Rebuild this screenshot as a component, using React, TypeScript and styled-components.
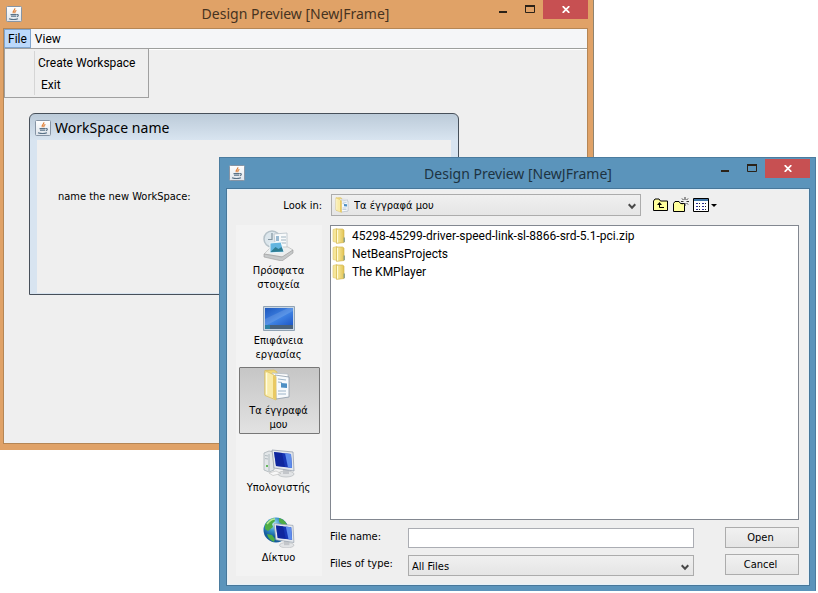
import React from "react";
import styled, { createGlobalStyle, css } from "styled-components";

const titleFont = '"Noto Sans", sans-serif';
const uiFont = 'Roboto, "Noto Sans", sans-serif';
const labelFont = '"DejaVu Sans Condensed", "Noto Sans", sans-serif';

const GlobalStyle = createGlobalStyle`
  *, *::before, *::after { box-sizing: border-box; }
  body { margin: 0; background: #fff; }
  button, input, select { font: inherit; color: inherit; margin: 0; }
`;

/* ---------- desktop and windows ---------- */

const Desktop = styled.main`
  position: relative;
  min-height: 100vh;
  overflow: hidden;
  font: 12px/18px ${uiFont};
  color: #000;
`;

const WindowFrame = styled.section<{ $tone: "orange" | "blue" }>`
  position: absolute;
  display: flex;
  flex-direction: column;
  ${({ $tone }) =>
    $tone === "orange"
      ? css`
          top: 0;
          left: 0;
          right: 224px;
          height: 450px;
          padding: 0 5px 6px 3px;
          background: #e0a267;
          border-right: 1px solid #8f8470;
        `
      : css`
          top: 157px;
          left: 219px;
          right: 2px;
          bottom: 2px;
          min-height: 434px;
          padding: 0 5px 4px 6px;
          background: #5b94bb;
          border: 1px solid #4b7c9f;
          border-bottom-color: #5b94bb;
        `}
`;

const TitleBar = styled.header<{ $tall?: boolean }>`
  display: grid;
  grid-template-columns: 1fr auto 1fr;
  height: ${({ $tall }) => ($tall ? 30 : 28)}px;
  padding-top: ${({ $tall }) => ($tall ? 1 : 0)}px;
  flex: none;
`;

const TitleIcon = styled.span`
  padding: 6px 3px 0;
  line-height: 0;
`;

const Title = styled.h1<{ $tone: "orange" | "blue" }>`
  margin: 0;
  padding-top: ${({ $tone }) => ($tone === "orange" ? 3 : 4)}px;
  font: 400 14px/22px ${titleFont};
  white-space: nowrap;
  color: ${({ $tone }) => ($tone === "orange" ? "#46331f" : "#1d3342")};
`;

const Controls = styled.div`
  display: flex;
  justify-content: flex-end;
`;

const ControlButton = styled.button<{ $close?: boolean }>`
  display: flex;
  align-items: center;
  justify-content: center;
  width: ${({ $close }) => ($close ? 45 : 27)}px;
  height: 19px;
  padding: 0;
  border: 0;
  color: ${({ $close }) => ($close ? "#fff" : "#2b2218")};
  background: ${({ $close }) => ($close ? "#c75052" : "transparent")};
`;

const Client = styled.div<{ $tone: "orange" | "blue" }>`
  flex: 1;
  min-height: 0;
  display: flex;
  flex-direction: column;
  background: #efefef;
  border: 1px solid ${({ $tone }) => ($tone === "orange" ? "#b58655" : "#47779a")};
  ${({ $tone }) => $tone === "blue" && "box-shadow: inset 0 0 0 1px #e6f1f8;"}
`;

/* ---------- menus ---------- */

const MenuBar = styled.nav`
  display: flex;
  height: 20px;
  background: #f5f6f8;
  border-bottom: 1px solid #9d9f9d;
  box-shadow: 0 1px #fff;
`;

const MenuSlot = styled.div`
  position: relative;
`;

const MenuButton = styled.button<{ $open?: boolean }>`
  height: 19px;
  padding: 1px 3px 0;
  line-height: 17px;
  border: 1px solid ${({ $open }) => ($open ? "#7fa5cf" : "transparent")};
  background: ${({ $open }) => ($open ? "#bcd9fb" : "transparent")};
`;

const MenuPopup = styled.div`
  position: absolute;
  top: 19px;
  left: 0;
  width: 145px;
  display: flex;
  flex-direction: column;
  padding: 3px 0 1px;
  border: 1px solid #a0a0a0;
  background: linear-gradient(#d5d5d5, #d5d5d5) 29px 2px / 1px calc(100% - 4px) no-repeat #efefef;
`;

const MenuItem = styled.button<{ $indent?: boolean }>`
  height: 22px;
  padding: 0 0 0 ${({ $indent }) => ($indent ? 36 : 33)}px;
  border: 0;
  background: none;
  text-align: left;
  white-space: nowrap;
`;

/* ---------- inner workspace frame ---------- */

const FramePane = styled.div`
  flex: 1;
  padding: 64px 128px 148px 25px;
  display: flex;
`;

const InnerFrame = styled.section`
  flex: 1;
  display: flex;
  flex-direction: column;
  padding: 0 7px 1px;
  border: 1px solid #47505a;
  border-radius: 6px 6px 0 0;
  background: linear-gradient(#bccbd9, #d8e4f0 26px, #d8e4f0);
`;

const InnerTitle = styled.h2`
  display: flex;
  align-items: center;
  gap: 4px;
  height: 26px;
  padding-top: 1px;
  margin: 0 0 0 -2px;
  font: 400 14px/20px ${titleFont};
  white-space: nowrap;
`;

const InnerBody = styled.div`
  flex: 1;
  padding: 48px 21px;
  background: #efefef;
  font: 11px/18px ${labelFont};
`;

/* ---------- file chooser ---------- */

const Chooser = styled.form`
  flex: 1;
  min-height: 0;
  display: grid;
  grid-template-columns: 86px minmax(0, 1fr);
  grid-template-rows: 22px minmax(0, 1fr);
  gap: 9px 8px;
  padding: 5px 10px 9px 9px;
`;

const Label = styled.label<{ $end?: boolean }>`
  font: 11px/20px ${labelFont};
  white-space: nowrap;
  text-align: ${({ $end }) => ($end ? "right" : "left")};
  padding-top: ${({ $end }) => ($end ? 2 : 0)}px;
`;

const LookRow = styled.div`
  display: flex;
  align-items: center;
  margin-left: 1px;
`;

const SelectBox = styled.div<{ $wide?: boolean }>`
  position: relative;
  height: ${({ $wide }) => ($wide ? 22 : 21)}px;
  flex: ${({ $wide }) => ($wide ? "0 1 310px" : "1")};
`;

const Select = styled.select<{ $icon?: boolean }>`
  appearance: none;
  display: block;
  width: 100%;
  height: 100%;
  padding: 2px 20px 0 ${({ $icon }) => ($icon ? 22 : 3)}px;
  border: 1px solid #acacac;
  border-radius: 0;
  background: linear-gradient(#f0f0f0, #e5e5e5);
  font: 11px/18px ${labelFont};
`;

const SelectIcon = styled.span`
  position: absolute;
  top: 3px;
  left: 4px;
  line-height: 0;
  pointer-events: none;
`;

const Arrow = styled.svg`
  position: absolute;
  right: 5px;
  top: 9px;
  pointer-events: none;
`;

const Tools = styled.div`
  display: flex;
  gap: 4px;
  margin-left: 12px;
`;

const ToolButton = styled.button`
  height: 16px;
  padding: 0;
  border: 0;
  background: none;
  line-height: 0;
`;

const Places = styled.nav`
  display: flex;
  flex-direction: column;
  gap: 2px;
  padding: 2px 2px 2px 3px;
  background: #f3f3f3;
`;

const Place = styled.button<{ $active?: boolean }>`
  height: 68px;
  display: flex;
  flex-direction: column;
  align-items: center;
  justify-content: center;
  gap: 3px;
  padding: 0 4px 0 2px;
  border: 1px solid ${({ $active }) => ($active ? "#777" : "transparent")};
  border-radius: 1px;
  background: ${({ $active }) => ($active ? "linear-gradient(#c6c6c6, #e2e2e2)" : "none")};
  font: 11px/14px ${labelFont};
`;

const PlaceText = styled.span`
  white-space: pre-line;
`;

const Main = styled.div`
  display: flex;
  flex-direction: column;
  gap: 7px;
  min-height: 0;
`;

const FileList = styled.ul`
  flex: 1;
  margin: 0;
  padding: 1px;
  list-style: none;
  border: 1px solid #828790;
  background: #fff;
`;

const FileRow = styled.li`
  display: flex;
  align-items: center;
  gap: 5px;
  height: 18px;
  white-space: nowrap;
`;

const Fields = styled.div`
  display: grid;
  grid-template-columns: 78px minmax(0, 1fr) 74px;
  grid-template-rows: 21px 22px;
  row-gap: 6px;
`;

const FieldCell = styled.div`
  display: flex;
  align-items: flex-end;
  margin-right: 31px;
`;

const TextInput = styled.input`
  width: 100%;
  height: 20px;
  padding: 0 3px;
  border: 1px solid #abadb3;
  background: #fff;
  font: 11px/18px ${labelFont};
`;

const PushButton = styled.button`
  height: 21px;
  padding: 0 3px 0 0;
  border: 1px solid #acacac;
  background: linear-gradient(#f1f1f1, #e5e5e5);
  font: 11px/18px ${labelFont};
`;

/* ---------- icons ---------- */

const JavaIcon = () => (
  <svg width="16" height="16" viewBox="0 0 16 16" aria-hidden="true">
    <defs>
      <linearGradient id="javaBg" x2="0" y2="1">
        <stop stopColor="#fff" />
        <stop offset="1" stopColor="#dfe5ec" />
      </linearGradient>
    </defs>
    <rect x=".5" y=".5" width="15" height="15" rx="1" fill="url(#javaBg)" stroke="#8795a5" />
    <path d="M8.8 2.2c.8 1.8-2.8 2.6-1.5 5M10.4 4.5c-1.8.8-2 1.4-1.2 2.8" fill="none" stroke="#e07a2d" strokeWidth="1.1" />
    <path d="M4.5 8.6h6M5 10.3h5M3 12.7c2.5.9 6.5.9 9 0M10.8 8.6c2.2-.5 2 1.5 0 2" fill="none" stroke="#587186" strokeWidth="1.1" />
  </svg>
);

const Minimise = () => (
  <svg width="8" height="19" aria-hidden="true"><path d="M0 12h8" stroke="currentColor" strokeWidth="2" /></svg>
);
const Maximise = () => (
  <svg width="10" height="19" aria-hidden="true">
    <path d="M.5 6v6.5h9V6" fill="none" stroke="currentColor" /><path d="M0 6h10" stroke="currentColor" strokeWidth="2" />
  </svg>
);
const Close = () => (
  <svg width="8" height="7" viewBox="0 0 8 7" aria-hidden="true">
    <path d="M.7.2l6.6 6.6M7.3.2L.7 6.8" stroke="currentColor" strokeWidth="1.8" />
  </svg>
);

const Chevron = () => (
  <Arrow width="8" height="7" viewBox="0 0 8 7" aria-hidden="true">
    <path d="M.7 1.3L4 4.8 7.3 1.3" fill="none" stroke="#484848" strokeWidth="2" />
  </Arrow>
);

const FolderIcon = () => (
  <svg width="15" height="16" viewBox="0 0 15 16" aria-hidden="true">
    <defs>
      <linearGradient id="folderFace">
        <stop stopColor="#f9eea9" />
        <stop offset="1" stopColor="#e2c455" />
      </linearGradient>
    </defs>
    <path d="M1 1.5L5 .5v14l-4-1z" fill="#f6e69a" stroke="#dcc671" strokeWidth=".6" />
    <path d="M4.5 1h6l1.5 1v12.5l-7.5.9z" fill="url(#folderFace)" stroke="#cfae45" strokeWidth=".6" />
    <path d="M5.5 2v12.5" stroke="#fffbd8" />
    <path d="M11.5 9.5h1.5v4.5l-1.5.6z" fill="#8fa48f" />
  </svg>
);

const DocFolder = ({ size }: { size: number }) => (
  <svg width={size} height={size} viewBox="0 0 32 32" aria-hidden="true">
    <path d="M2 1.5L11 1l3 2v26L2 26z" fill="#f0d778" stroke="#d8ba58" strokeWidth=".7" />
    <path d="M9 4l16 1v23l-16 1z" fill="#fdfdfd" stroke="#b3bcc5" strokeWidth=".8" />
    <path d="M12 6l14 2v20l-13 2z" fill="#f7fafc" stroke="#8d9ba8" strokeWidth=".8" />
    <path d="M15 10l8 1M15 13l4 .5M15 22h8M15 25h8" stroke="#9db4c8" strokeWidth="1.2" />
    <path d="M18 14l6 .6v4.4l-6-.4z" fill="#4d8fc4" />
    <path d="M2 1.5l8 4 3 2v23.5L2 26.5z" fill="#f9eba8" stroke="#dbbf61" strokeWidth=".8" />
    <path d="M10 6l3 2v22.5l-3-1.2z" fill="#e9c962" />
    <path d="M3.5 4v21.5" stroke="#fffce2" strokeWidth="1.4" />
  </svg>
);

const RecentIcon = () => (
  <svg width="32" height="32" viewBox="0 0 32 32" aria-hidden="true">
    <circle cx="9" cy="10" r="8" fill="#dce6ec" stroke="#b5c1c8" strokeWidth="1.5" />
    <path d="M9 4v6.5H5" fill="none" stroke="#8496a1" strokeWidth="1.2" />
    <path d="M11 5l13-1v18H13z" fill="#f8fafb" stroke="#b6c0c8" strokeWidth=".8" />
    <path d="M18 8h5M18 11h5M18 14h5" stroke="#9fb3c1" strokeWidth="1.2" />
    <path d="M13 7h3v5h-3z" fill="#98b9d1" />
    <path d="M1 25l7-7h17l5 3-10 7z" fill="#eceeee" stroke="#bbb" strokeWidth=".7" />
    <path d="M7 14l11-1 3 10-14 1z" fill="#62b5df" stroke="#edf6fa" />
    <path d="M7.5 23l5-5 3 2 3-2 2 4.5z" fill="#2e7d92" />
    <path d="M1 25l18 3 11-7v3l-11 8-18-4z" fill="#c6c9ca" stroke="#999" strokeWidth=".6" />
  </svg>
);

const DesktopIcon = () => (
  <svg width="32" height="32" viewBox="0 0 32 32" aria-hidden="true">
    <defs>
      <linearGradient id="desk" x2="1" y2="1">
        <stop stopColor="#1d57bd" />
        <stop offset=".55" stopColor="#4084e4" />
        <stop offset="1" stopColor="#1d57c8" />
      </linearGradient>
    </defs>
    <path d="M.5 7.5h31v24H.5z" fill="#c8d6e4" stroke="#91a3b4" />
    <path d="M2 9h28v17H2z" fill="url(#desk)" />
    <path d="M2 26h28v4H2z" fill="#48617c" />
    <path d="M2 26h5v4H2z" fill="#2b80a4" />
    <path d="M2 20L25 9h5v3L4 26H2z" fill="#fff" opacity=".13" />
  </svg>
);

const Monitor = () => (
  <>
    <ellipse cx="23" cy="28" rx="8" ry="3" fill="#e2e4e6" stroke="#b5b9bc" strokeWidth=".7" />
    <path d="M20 22h6v6h-6z" fill="#c3c6ca" />
    <path d="M9 4l21 2 1 19-20-3z" fill="#e4e8ed" stroke="#98a1ad" strokeWidth=".8" />
    <path d="M11 6l17 2 1 14-16-2z" fill="#1735b5" />
    <path d="M22 7.3l6 .7 1 14-4-.6z" fill="#5d8cec" />
    <path d="M11 6l8 1 3 14-9-1z" fill="#0b1e92" opacity=".65" />
  </>
);

const ComputerIcon = () => (
  <svg width="32" height="32" viewBox="0 0 32 32" aria-hidden="true">
    <path d="M1 7l5-2 5 1v18l-5 2-5-2z" fill="#e2e6e8" stroke="#a9b1b6" strokeWidth=".8" />
    <path d="M6 8v17M2 9.5l3 .5M2 12.5l3 .5" stroke="#a3aeb5" strokeWidth=".8" />
    <path d="M3 19h2v2H3z" fill="#65b85b" />
    <Monitor />
    <path d="M6 27l7-2 5 2.5-8 2z" fill="#f8f8f8" stroke="#bbb" strokeWidth=".6" />
  </svg>
);

const NetworkIcon = () => (
  <svg width="32" height="32" viewBox="0 0 32 32" aria-hidden="true">
    <defs>
      <radialGradient id="globe" cx=".4" cy=".25">
        <stop stopColor="#b7ebf8" />
        <stop offset=".55" stopColor="#3a94cd" />
        <stop offset="1" stopColor="#155d9d" />
      </radialGradient>
    </defs>
    <circle cx="13" cy="14" r="12.5" fill="url(#globe)" />
    <path d="M2 9c2-4 5-6 9-7l1 3-3 3 1 3-5 4-3-2zM4 18l5 1 3 4-1 3c-4-2-6-4-7-8zM16 2c4 1 7 4 8 7l-4 0-4-3z" fill="#4ead45" />
    <path d="M4 8c3-4 5-5 8-5" fill="none" stroke="#b7e897" strokeWidth="1.5" />
    <g transform="translate(3 4) scale(.9)"><Monitor /></g>
  </svg>
);

const UpFolder = () => (
  <svg width="16" height="16" viewBox="0 0 16 16" aria-hidden="true">
    <path d="M.5 13.5v-9.5l1.5-2h4l1.5 2h7v9.5z" fill="#ffff9c" stroke="#000" />
    <path d="M4 8h5L6.5 5z" fill="#000" />
    <path d="M6.5 7v3.5H11" fill="none" stroke="#000" />
  </svg>
);
const NewFolder = () => (
  <svg width="16" height="16" viewBox="0 0 16 16" aria-hidden="true">
    <path d="M.5 14.5V6.5L2 4.5h4l1.5 2h4v8z" fill="#ffff9c" stroke="#000" />
    <path d="M12 0v3M12 6v3M8 4.5h2.5M13.5 4.5H16M9 1.5l1.5 1.5M15 1.5L13.5 3M13.5 6L15 7.5M10.5 6.2L9.3 7.4" stroke="#222" strokeWidth=".9" />
  </svg>
);
const ListView = () => (
  <svg width="24" height="16" viewBox="0 0 24 16" aria-hidden="true">
    <path d="M.5 1.5h15v13H.5z" fill="#fff" stroke="#000" />
    <path d="M1 3h14" stroke="#3f74a5" strokeWidth="2" />
    <path d="M3 6.5h2M9 6.5h2M3 9.5h2M9 9.5h2M3 12.5h2M9 12.5h2" stroke="#2c2c90" />
    <path d="M6 6.5h1M12 6.5h1M6 9.5h1M12 9.5h1M6 12.5h1M12 12.5h1" stroke="#222" />
    <path d="M18 7h6l-3 3z" fill="#000" />
  </svg>
);

/* ---------- page ---------- */

const places = [
  { text: "Πρόσφατα\nστοιχεία", icon: <RecentIcon /> },
  { text: "Επιφάνεια\nεργασίας", icon: <DesktopIcon /> },
  { text: "Τα έγγραφά\nμου", icon: <DocFolder size={32} />, active: true },
  { text: "Υπολογιστής", icon: <ComputerIcon /> },
  { text: "Δίκτυο", icon: <NetworkIcon /> },
];

const files = ["45298-45299-driver-speed-link-sl-8866-srd-5.1-pci.zip", "NetBeansProjects", "The KMPlayer"];

const WindowTitle = ({ tone }: { tone: "orange" | "blue" }) => (
  <TitleBar $tall={tone === "blue"}>
    <TitleIcon><JavaIcon /></TitleIcon>
    <Title $tone={tone}>Design Preview [NewJFrame]</Title>
    <Controls>
      <ControlButton type="button" aria-label="Minimise"><Minimise /></ControlButton>
      <ControlButton type="button" aria-label="Maximise"><Maximise /></ControlButton>
      <ControlButton type="button" $close aria-label="Close"><Close /></ControlButton>
    </Controls>
  </TitleBar>
);

export default function App() {
  return (
    <Desktop>
      <GlobalStyle />
      <WindowFrame $tone="orange">
        <WindowTitle tone="orange" />
        <Client $tone="orange">
          <MenuBar>
            <MenuSlot>
              <MenuButton type="button" $open aria-expanded="true">File</MenuButton>
              <MenuPopup>
                <MenuItem type="button">Create Workspace</MenuItem>
                <MenuItem type="button" $indent>Exit</MenuItem>
              </MenuPopup>
            </MenuSlot>
            <MenuButton type="button">View</MenuButton>
          </MenuBar>
          <FramePane>
            <InnerFrame>
              <InnerTitle><JavaIcon />WorkSpace name</InnerTitle>
              <InnerBody>name the new WorkSpace:</InnerBody>
            </InnerFrame>
          </FramePane>
        </Client>
      </WindowFrame>

      <WindowFrame $tone="blue">
        <WindowTitle tone="blue" />
        <Client $tone="blue">
          <Chooser onSubmit={(e) => e.preventDefault()}>
            <Label $end htmlFor="look-in">Look in:</Label>
            <LookRow>
              <SelectBox $wide>
                <Select id="look-in" $icon><option>Τα έγγραφά μου</option></Select>
                <SelectIcon><DocFolder size={16} /></SelectIcon>
                <Chevron />
              </SelectBox>
              <Tools>
                <ToolButton type="button" aria-label="Up one level"><UpFolder /></ToolButton>
                <ToolButton type="button" aria-label="New folder"><NewFolder /></ToolButton>
                <ToolButton type="button" aria-label="View"><ListView /></ToolButton>
              </Tools>
            </LookRow>
            <Places>
              {places.map((p) => (
                <Place key={p.text} type="button" $active={p.active}>
                  {p.icon}
                  <PlaceText>{p.text}</PlaceText>
                </Place>
              ))}
            </Places>
            <Main>
              <FileList>
                {files.map((f) => (
                  <FileRow key={f}><FolderIcon />{f}</FileRow>
                ))}
              </FileList>
              <Fields>
                <Label htmlFor="file-name">File name:</Label>
                <FieldCell><TextInput id="file-name" type="text" /></FieldCell>
                <PushButton type="submit">Open</PushButton>
                <Label htmlFor="file-type">Files of type:</Label>
                <FieldCell>
                  <SelectBox>
                    <Select id="file-type"><option>All Files</option></Select>
                    <Chevron />
                  </SelectBox>
                </FieldCell>
                <PushButton type="button">Cancel</PushButton>
              </Fields>
            </Main>
          </Chooser>
        </Client>
      </WindowFrame>
    </Desktop>
  );
}
